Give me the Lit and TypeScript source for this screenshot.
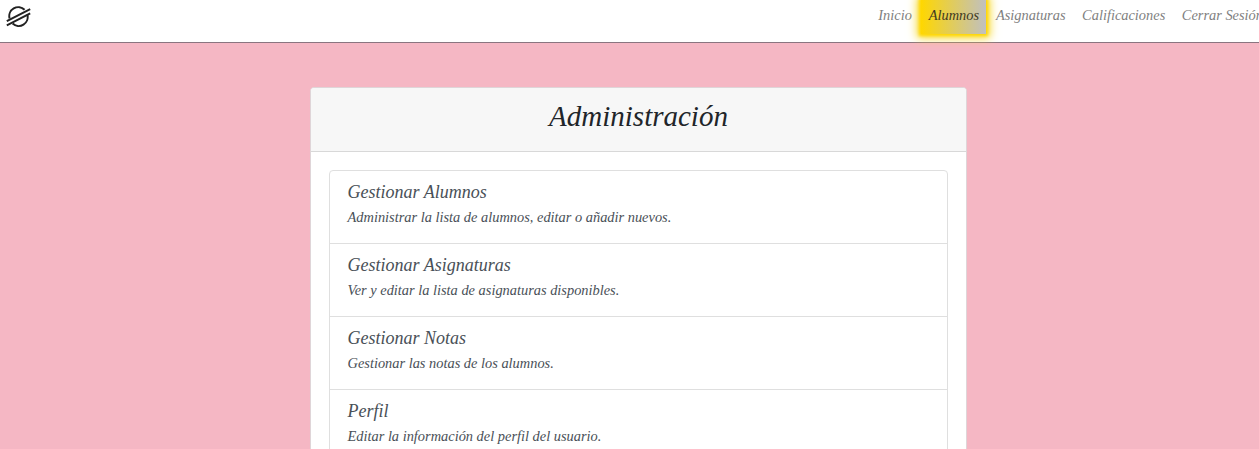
import { LitElement, html, css } from "lit";
import { customElement } from "lit/decorators.js";

const links = ["Inicio", "Alumnos", "Asignaturas", "Calificaciones", "Cerrar Sesión"];
const entries = [
  ["Gestionar Alumnos", "Administrar la lista de alumnos, editar o añadir nuevos."],
  ["Gestionar Asignaturas", "Ver y editar la lista de asignaturas disponibles."],
  ["Gestionar Notas", "Gestionar las notas de los alumnos."],
  ["Perfil", "Editar la información del perfil del usuario."],
];

@customElement("app-root")
export class AppRoot extends LitElement {
  static styles = css`
    :host { display: block; height: 449px; overflow: hidden; background: #f5b7c4;
      font-family: "Liberation Serif", "Times New Roman", serif; font-style: italic; font-size: 14.4px; color: #212529; }
    * { box-sizing: border-box; }
    .bar { height: 43px; background: #fff; border-bottom: 1px solid #8a7580; display: flex;
      justify-content: space-between; align-items: flex-start; }
    .logo { display: block; width: 26px; height: 22px; margin: 6px 0 0 6px; }
    .nav { display: flex; width: 389px; flex: none; }
    .link { flex: none; padding: 5px 8.3px 0; height: 34px; line-height: 20px; color: #7f7f7f; white-space: nowrap; }
    .active { margin: 0 1.6px 0 1px; padding: 5px 7px 0 7.5px; color: #40391f; background: linear-gradient(90deg, #ffd700, #c0c0c0);
      box-shadow: 0 0 3px 2px #ffd700, 0 0 9px 4px #f7da30; }
    .card { width: 657px; height: 420px; margin: 44px 0 0 310px; background: #fff;
      border: 1px solid #dfd5d8; border-radius: 4px; }
    .head { height: 64px; background: #f7f7f7; border-bottom: 1px solid #d8d8d8; border-radius: 3px 3px 0 0;
      text-align: center; padding-top: 11px; }
    .title { margin: 0; font-size: 29px; line-height: 34px; font-weight: 400; }
    .list { margin: 18px 18px 0; border: 1px solid #dfdfdf; border-radius: 4px; }
    .item { height: 73px; padding: 10px 17.5px 0; border-bottom: 1px solid #dfdfdf; color: #495057; }
    .name { margin: 0 0 3px; font-size: 18px; line-height: 22px; font-weight: 400; }
    .desc { margin: 0; line-height: 22px; }
  `;
  render() {
    return html`
      <header class="bar">
        <svg class="logo" viewBox="0 0 26 22" fill="none" stroke="#222" stroke-width="2">
          <path d="M3.6 12.6A9 9 0 0 1 18.6 3.8M21.3 8.4A9 9 0 0 1 6.6 17.6" />
          <path d="M.8 15.1L24.2 3.1M.8 19.4L24.2 7.4" />
        </svg>
        <nav class="nav">${links.map((l, i) => html`<a class="link ${i === 1 ? "active" : ""}">${l}</a>`)}</nav>
      </header>
      <main class="card">
        <div class="head"><h1 class="title">Administración</h1></div>
        <div class="list">${entries.map(([n, d]) => html`<div class="item"><h2 class="name">${n}</h2><p class="desc">${d}</p></div>`)}</div>
      </main>`;
  }
}
